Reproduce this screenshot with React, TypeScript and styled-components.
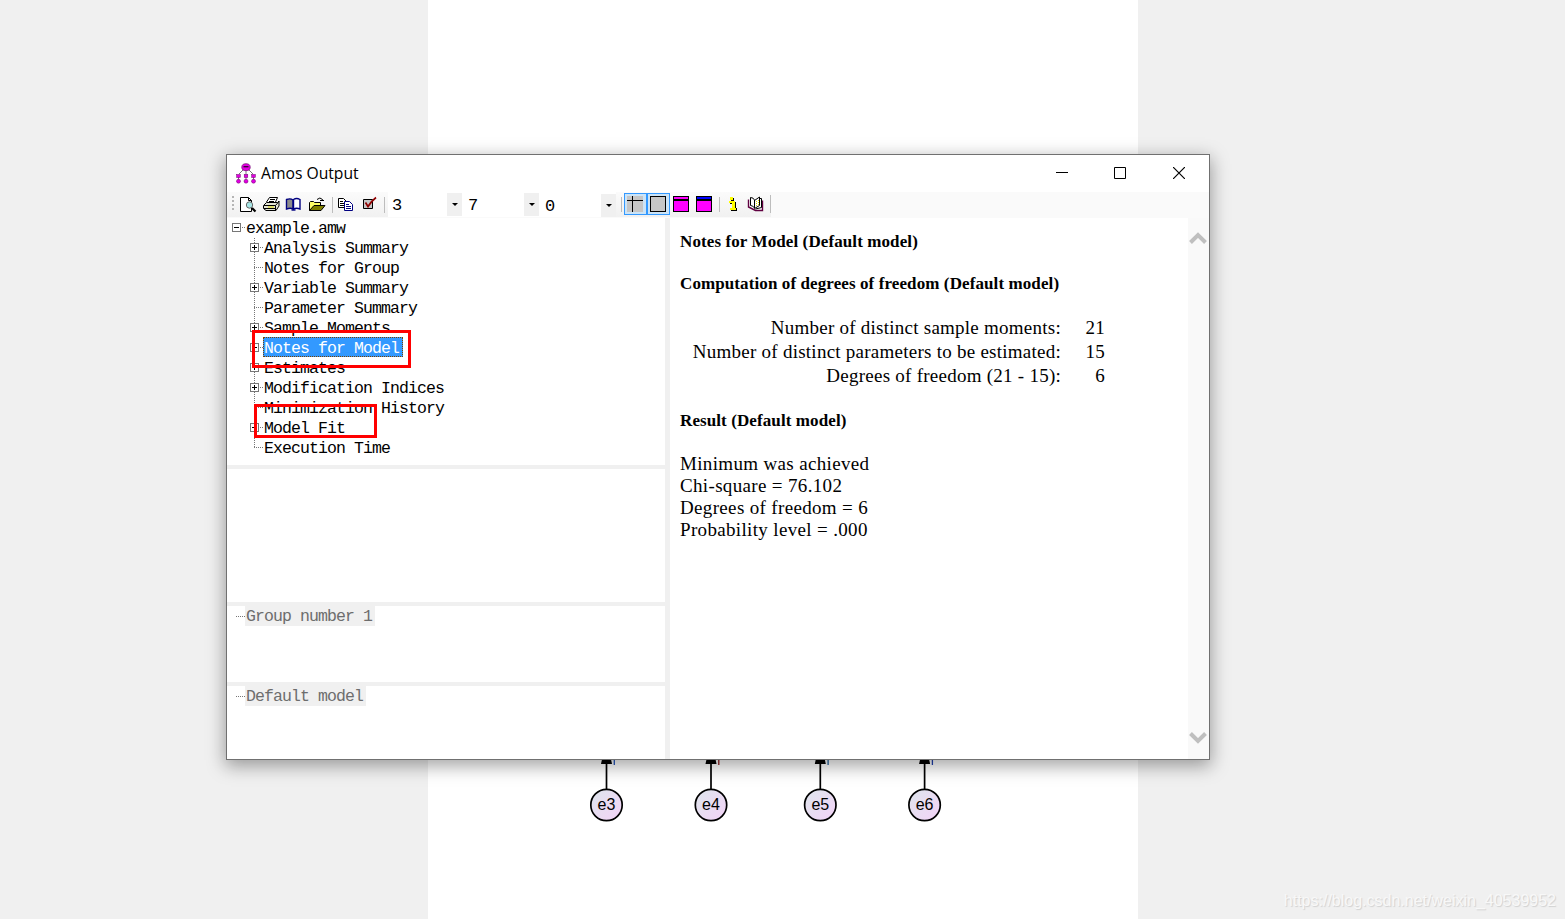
import React from "react";
import styled, { createGlobalStyle } from "styled-components";

const Global = createGlobalStyle`
  *{box-sizing:border-box}
  html,body{margin:0;padding:0;overflow:hidden}
  body{font-family:"Liberation Sans",Arial,sans-serif;color:#000}
  svg{display:block}
`;
const Desktop = styled.main`
  position:relative;width:1565px;height:919px;background:#f0f0f0;
  display:flex;justify-content:center;overflow:hidden;
`;
const Paper = styled.div`width:710px;height:919px;background:#fff;`;
const Diagram = styled.svg`position:absolute;left:580px;top:750px;`;
const Window = styled.section`
  position:absolute;left:226px;top:154px;width:984px;height:606px;
  border:1px solid #707070;background:#fff;display:flex;flex-direction:column;
  box-shadow:0 5px 17px 1px rgba(0,0,0,.36);
`;
const TitleBar = styled.header`
  height:37px;flex:none;display:flex;align-items:center;padding-left:8px;
`;
const Title = styled.h1`
  margin:0 0 0 4px;flex:1;font:400 15.7px "Open Sans","Noto Sans",sans-serif;line-height:37px;
`;
const Controls = styled.div`display:flex;width:176px;height:36px;align-self:flex-start;`;
const Control = styled.div<{ $w: number }>`
  width:${p => p.$w}px;display:flex;align-items:center;justify-content:center;
`;
const ToolBar = styled.div`height:26px;flex:none;display:flex;background:#fafafa;`;
const ToolStrip = styled.div`
  width:544px;height:25px;display:flex;align-items:center;
  background:linear-gradient(#fbfbfb,#f1f1f1);
`;
const ToolIcons = styled.svg`flex:none;`;
const Combo = styled.div<{ $w: number; $drop?: number; $inset?: number }>`
  width:${p => p.$w}px;height:25px;background:#fff;display:flex;align-items:flex-start;
  justify-content:space-between;font:17px/26px "Liberation Mono",monospace;
  padding:${p => 1 + (p.$drop || 0)}px 0 0 ${p => p.$inset || 4}px;
`;
const Arrow = styled.span`
  width:15px;height:23px;background:#f0f0f0;display:flex;align-items:center;justify-content:center;
  &::after{content:"";border:3px solid transparent;border-top-color:#000;border-bottom:0}
`;
const Body = styled.div`flex:1;display:flex;min-height:0;`;
const Left = styled.div`width:438px;display:flex;flex-direction:column;`;
const Pane = styled.div<{ $h: number; $last?: boolean }>`
  height:${p => p.$h}px;flex:none;border-bottom:${p => (p.$last ? 0 : 4)}px solid #f0f0f0;
`;
const Tree = styled.div`position:relative;`;
const Row = styled.div<{ $indent?: number }>`
  height:20px;display:flex;align-items:center;padding-left:${p => p.$indent ?? 23}px;
`;
const Joint = styled.svg`flex:none;`;
const Label = styled.span<{ $selected?: boolean; $muted?: boolean; $w?: number }>`
  height:20px;line-height:${p => (p.$selected ? 24 : 22)}px;white-space:pre;letter-spacing:-.9px;
  font-family:"Liberation Mono",monospace;font-size:16.5px;
  width:${p => (p.$w ? p.$w + "px" : "auto")};
  color:${p => (p.$selected ? "#fff" : p.$muted ? "#6d6d6d" : "#000")};
  background:${p => (p.$selected ? "#3399ff" : p.$muted ? "#f0f0f0" : "transparent")};
  outline:${p => (p.$selected ? "1px dotted #7a4100" : "none")};
  outline-offset:-1px;
  padding-left:${p => (p.$muted ? 1 : 0)}px;
  margin:${p => (p.$selected ? "-2px 0 0 -1px" : "0")};
  text-indent:${p => (p.$selected ? 1 : 0)}px;
`;
const Mark = styled.div<{ $x: number; $y: number; $w: number; $h: number }>`
  position:absolute;left:${p => p.$x}px;top:${p => p.$y}px;width:${p => p.$w}px;height:${p => p.$h}px;
  border:3px solid #f00;
`;
const Divider = styled.div`width:5px;background:#f0f0f0;`;
const Notes = styled.article`
  flex:1;padding:13px 0 0 10px;font:19px/22px "Liberation Serif","Times New Roman",serif;
`;
const Heading = styled.h2<{ $gap: number }>`
  margin:0 0 ${p => p.$gap}px;font-size:17px;letter-spacing:.1px;line-height:22px;font-weight:700;white-space:nowrap;
`;
const Stats = styled.div`
  display:grid;grid-template-columns:381px 44px;grid-auto-rows:24px;line-height:24px;
  text-align:right;white-space:nowrap;margin-bottom:22px;letter-spacing:.25px;
`;
const Line = styled.p`margin:0;white-space:nowrap;letter-spacing:.34px;`;
const ScrollBar = styled.div`
  width:21px;background:#f9f9f9;display:flex;flex-direction:column;justify-content:space-between;
  align-items:flex-start;padding:14px 0 15px 1px;
`;
const Watermark = styled.div`
  position:absolute;right:9px;bottom:8px;font-size:16px;line-height:20px;color:#f8f8f8;
  text-shadow:1px 1px 1px #d0d0d0;white-space:nowrap;
`;

type Kind = "plus" | "minus" | "leaf" | "last" | "stub";
const items: { text: string; kind: Kind; selected?: boolean }[] = [
  { text: "Analysis Summary", kind: "plus" },
  { text: "Notes for Group", kind: "leaf" },
  { text: "Variable Summary", kind: "plus" },
  { text: "Parameter Summary", kind: "leaf" },
  { text: "Sample Moments", kind: "plus" },
  { text: "Notes for Model", kind: "plus", selected: true },
  { text: "Estimates", kind: "plus" },
  { text: "Modification Indices", kind: "plus" },
  { text: "Minimization History", kind: "leaf" },
  { text: "Model Fit", kind: "plus" },
  { text: "Execution Time", kind: "last" },
];

function Branch({ kind }: { kind: Kind }) {
  const box = kind === "plus" || kind === "minus";
  const trunk = kind === "plus" || kind === "leaf" ? "M4.5 0V20" : kind === "last" ? "M4.5 0V10" : "";
  return (
    <Joint width="14" height="20" shapeRendering="crispEdges">
      <path d={trunk} stroke="#777" strokeDasharray="1 1" />
      <path d={kind === "stub" ? "M5 10.5H14" : "M4 9.5H14"} stroke="#777" strokeDasharray="1 1" />
      {box && <>
        <rect x=".5" y="5.5" width="8" height="8" fill="#fff" stroke="#777" />
        <path d={"M2 9.5H7" + (kind === "plus" ? "M4.5 7V12" : "")} stroke="#000" />
      </>}
    </Joint>
  );
}

function Logo() {
  return (
    <svg width="22" height="22" viewBox="0 0 22 22">
      <path d="M9 6L4 11M11 6V20M13 6L18 11M3.500 12V20M18.500 12V20" stroke="#777" />
      <ellipse cx="11" cy="4.2" rx="4.200" ry="3.500" fill="#e400e4" stroke="#700070" strokeWidth=".7" />
      <path d="M8.500 3.700h5" stroke="#300030" strokeWidth="1.300" />
      {[3.5, 11, 18.5].map(x => <g key={x} fill="#e000e0" stroke="#700070" strokeWidth=".5">
        <rect x={x - 1.8} y="11.500" width="3.600" height="3" /><circle cx={x} cy="18.200" r="2" />
      </g>)}
    </svg>
  );
}

function FileIcons() {
  return (
    <ToolIcons width="161" height="25" viewBox="227 192 161 25">
      <path d="M233 196v15" stroke="#b5b5b5" strokeWidth="2" strokeDasharray="2 2" shapeRendering="crispEdges" />
      <g stroke="#000" strokeLinejoin="round">
        <path d="M240.500 197.500h8l3 3v11h-11z" fill="#fff" /><path d="M248.500 197.500v3h3" fill="none" />
        <circle cx="249.500" cy="205" r="3.200" fill="#a6e5e5" stroke="#666" /><path d="M252 208l3.500 3.500" strokeWidth="2.200" />
        <path d="M266.500 202l3-4.500h8l-2 4.500" fill="#fff" /><path d="M270 199.500h5M269 201.500h5" />
        <path d="M263.500 205.500l3-3h11l1.500-1.500v5l-3 4.500h-10l-2.500-2z" fill="#e4e4d4" />
        <path d="M264 205.500h11.500v5M275.500 205.500l3.500-4M264 208.500h11" fill="none" /><path d="M268 207h6" stroke="#dd0" />
      </g>
      <path d="M286.500 199.500q4-1.500 6.500 .5v9q-2.500-1.500-6.500 0z" fill="#8c8c8c" stroke="#000080" strokeWidth="1.400" />
      <path d="M293.500 199.500q3-2 6.500 0v9.500q-3.500-1.500-6.500 0z" fill="#fff" stroke="#000080" strokeWidth="1.400" />
      <path d="M291.500 210h4" fill="none" stroke="#000080" strokeWidth="1.400" />
      <g stroke="#000"><path d="M309.500 210.500v-8l1-1h3l1 1h6v3" fill="#ffff66" />
        <path d="M309.500 210.500l4.500-5h11l-4 5z" fill="#808000" />
        <path d="M317 199.500q3-3 5.500 0v1.500M320 200.500h4" fill="none" /></g>
      <path d="M332.500 197v16M384.500 197v16" stroke="#bdbdbd" />
      <path d="M338.500 198.500h5l2.500 2.500v6.500h-7.500z" fill="#fff" stroke="#000" />
      <path d="M340 201.500h3M340 203.500h4M340 205.500h4" stroke="#000" />
      <path d="M344.500 201.500h5l3 3v6h-8z" fill="#fff" stroke="#000080" />
      <path d="M346 204.500h3M346 206.500h5M346 208.500h5" stroke="#000080" />
      <path d="M363.500 199.500h9v9h-9z" fill="#c6c6c6" stroke="#000" />
      <path d="M365.500 202.500l2.500 4q3-5 8-9" fill="none" stroke="#900000" strokeWidth="1.700" />
    </ToolIcons>
  );
}

function ViewIcons() {
  return (
    <ToolIcons width="155" height="25" viewBox="616 192 155 25">
      <path d="M621.500 197v15M719.500 197v15M770.500 195v18" stroke="#bdbdbd" />
      <g shapeRendering="crispEdges">
        <path d="M624.500 193.500h22v21h-22zM647.500 193.500h22v21h-22z" fill="#cce4f7" stroke="#3399ff" />
        <path d="M627 196h16v16h-16z" fill="#c6c6c6" /><path d="M627 200.500h16M632.500 196v16" stroke="#000" />
        <path d="M650.500 196.500h15v15h-15z" fill="#c6c6c6" stroke="#000" />
        <path d="M673.500 196.500h15v15h-15zM696.500 196.500h15v15h-15z" fill="#f0f" stroke="#000" />
        <path d="M674 200h14" stroke="#000" strokeWidth="2" />
        <path d="M697 198h14" stroke="#00f" strokeWidth="2" /><path d="M697 200h14" stroke="#000" strokeWidth="2" />
      </g>
      <g shapeRendering="crispEdges">
        <path d="M730 197h3v3h-3zM729 201h6v7h1v2h-6v-2h2v-5h-3z" fill="#ff0" />
        <path d="M733.500 198v3M731 200.500h2M735.500 202v6M730 203.500h2M736.500 208v3M731 210.500h6" fill="none" stroke="#000" />
      </g>
      <path d="M748.500 199.500v7.500l7 3.500h7v-10" fill="#fff" stroke="#600040" strokeWidth="1.400" />
      <path d="M750.500 197.500q3 0 4 2.500v8q-1.500-2.500-4-2.500zM754.500 200.500l5-3.500v8.500l-5 3z" fill="#fff" stroke="#000" />
      <path d="M759.500 198.500h2v9l-6 1.500" fill="none" stroke="#000" />
      <path d="M756.500 201v5M758.500 200v5" stroke="#dd0" strokeDasharray="1 1" />
    </ToolIcons>
  );
}

const errors = [
  { x: 606.5, name: "e3", tick: "#2455bd" },
  { x: 711, name: "e4", tick: "#902020" },
  { x: 820.3, name: "e5", tick: "#2465a0" },
  { x: 924.6, name: "e6", tick: "#2040b0" },
];

export default function App() {
  return (
    <Desktop>
      <Global />
      <Paper />
      <Diagram width="370" height="80" viewBox="580 750 370 80">
        <defs>
          <linearGradient id="node" x1="0" y1="0" x2="1" y2="1">
            <stop offset=".2" stopColor="#e2e2ee" /><stop offset=".8" stopColor="#efd6f5" />
          </linearGradient>
        </defs>
        {errors.map(e => <g key={e.name}>
          <path d={`M${e.x} 760V789`} stroke="#000" strokeWidth="1.700" />
          <path d={`M${e.x - 4} 757h8l1.500 7h-11z`} />
          <path d={`M${e.x + 7.8} 758v7`} stroke={e.tick} strokeWidth="1.300" />
          <circle cx={e.x} cy="805" r="15.700" fill="url(#node)" stroke="#000" strokeWidth="1.700" />
          <text x={e.x} y="810" textAnchor="middle" fontSize="16" fontFamily="Liberation Sans, sans-serif">{e.name}</text>
        </g>)}
      </Diagram>
      <Window>
        <TitleBar>
          <Logo /><Title>Amos Output</Title>
          <Controls>
            <Control $w={58}><svg width="12" height="12"><path d="M0 5.500h12" stroke="#000" /></svg></Control>
            <Control $w={58}><svg width="12" height="12"><path d="M.5.5h11v11H.5z" fill="none" stroke="#000" /></svg></Control>
            <Control $w={60}><svg width="12" height="12"><path d="M0 0l12 12M12 0L0 12" stroke="#000" strokeWidth="1.200" /></svg></Control>
          </Controls>
        </TitleBar>
        <ToolBar>
          <ToolStrip>
            <FileIcons />
            <Combo $w={74}>3<Arrow /></Combo>
            <Combo $w={77} $inset={6}>7<Arrow /></Combo>
            <Combo $w={77} $drop={1} $inset={6}>0<Arrow /></Combo>
            <ViewIcons />
          </ToolStrip>
        </ToolBar>
        <Body>
          <Left>
            <Pane $h={251}>
              <Tree>
                <Row $indent={5}><Branch kind="minus" /><Label>example.amw</Label></Row>
                {items.map(item => <Row key={item.text}>
                  <Branch kind={item.kind} />
                  <Label $selected={item.selected} $w={item.selected ? 140 : undefined}>{item.text}</Label>
                </Row>)}
                <Mark $x={25} $y={112} $w={159} $h={38} />
                <Mark $x={27} $y={186} $w={123} $h={34} />
              </Tree>
            </Pane>
            <Pane $h={137} />
            <Pane $h={80}><Row $indent={4}><Branch kind="stub" /><Label $muted $w={130}>Group number 1</Label></Row></Pane>
            <Pane $h={73} $last><Row $indent={4}><Branch kind="stub" /><Label $muted $w={121}>Default model</Label></Row></Pane>
          </Left>
          <Divider />
          <Notes>
            <Heading $gap={20}>Notes for Model (Default model)</Heading>
            <Heading $gap={21}>Computation of degrees of freedom (Default model)</Heading>
            <Stats>
              <span>Number of distinct sample moments:</span><span>21</span>
              <span>Number of distinct parameters to be estimated:</span><span>15</span>
              <span>Degrees of freedom (21 - 15):</span><span>6</span>
            </Stats>
            <Heading $gap={21}>Result (Default model)</Heading>
            <Line>Minimum was achieved</Line><Line>Chi-square = 76.102</Line>
            <Line>Degrees of freedom = 6</Line><Line>Probability level = .000</Line>
          </Notes>
          <ScrollBar>
            <svg width="18" height="13"><path d="M1.500 10.500L9 3l7.500 7.500" fill="none" stroke="#bfbfbf" strokeWidth="4" /></svg>
            <svg width="18" height="13"><path d="M1.500 2.500L9 10l7.500-7.500" fill="none" stroke="#bfbfbf" strokeWidth="4" /></svg>
          </ScrollBar>
        </Body>
      </Window>
      <Watermark>https://blog.csdn.net/weixin_40539952</Watermark>
    </Desktop>
  );
}
